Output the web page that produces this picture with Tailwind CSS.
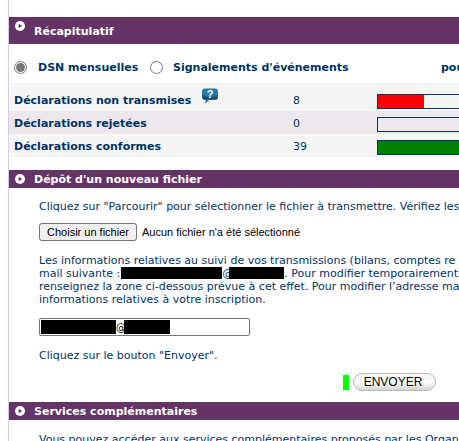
<!DOCTYPE html>
<html lang="fr">
<head>
<meta charset="utf-8">
<script src="https://cdn.jsdelivr.net/npm/@tailwindcss/browser@4"></script>
</head>
<body class="bg-white overflow-hidden">
<div class="w-[459px] h-[441px] overflow-hidden font-['DejaVu_Sans',Verdana,sans-serif] text-[11px] leading-[13px] text-[#003366]">
  <div class="ml-2 h-[441px] border-l border-[#dcc9e6] pt-[17px]">

    <!-- Récapitulatif -->
    <div class="h-[27px] bg-[#663366] flex items-start text-white font-bold">
      <svg class="ml-[6px] mt-[4px] w-[10px] h-[10px] shrink-0" viewBox="0 0 10 10"><circle cx="5" cy="5" r="5" fill="#fff"/><path d="M3.7 2.8 7.2 5 3.7 7.2Z" fill="#663366"/></svg>
      <span class="ml-[9px] mt-[8px]">Récapitulatif</span>
    </div>

    <div class="h-[39px] flex items-center font-bold whitespace-nowrap pt-[8px]">
      <span class="ml-[5px] w-[13px] h-[13px] shrink-0 rounded-full border border-[#767676] flex items-center justify-center"><span class="block w-[9px] h-[9px] rounded-full bg-[#767676]"></span></span>
      <span class="ml-[11px] w-[99px] shrink-0">DSN mensuelles</span>
      <span class="ml-[13px] w-[13px] h-[13px] shrink-0 rounded-full border border-[#767676]"></span>
      <span class="ml-[10px] w-[176px] shrink-0">Signalements d'événements</span>
      <span class="ml-[92px]">pour</span>
    </div>

    <div class="h-[28px] bg-[#f5f5f5] flex items-start">
      <span class="ml-[5px] mt-[11px] w-[188px] shrink-0 font-bold whitespace-nowrap">Déclarations non transmises</span>
      <svg class="mt-[5px] w-[16px] h-[16px] shrink-0" viewBox="0 0 16 16"><path d="M3 0.5H13Q16 0.5 16 3.5V9Q16 12 13 12H7L3.5 15.5V12H3Q0 12 0 9V3.5Q0 0.5 3 0.5Z" fill="#2a7aa8"/><path d="M0.5 7Q8 11 15.5 7V9Q15.5 11.5 13 11.5H3Q0.5 11.5 0.5 9Z" fill="#14506f"/><text x="8" y="10" text-anchor="middle" font-size="11" font-weight="700" fill="#fff" font-family="Liberation Sans">?</text></svg>
      <span class="ml-[75px] mt-[11px] w-[84px] shrink-0">8</span>
      <span class="mt-[11px] h-[15px] w-[100px] shrink-0 border border-[#003366] flex"><span class="block w-[46px] bg-[#ff0000]"></span></span>
    </div>
    <div class="h-[23px] bg-[#ece8ec] flex items-start">
      <span class="ml-[5px] mt-[6px] w-[279px] shrink-0 font-bold whitespace-nowrap">Déclarations rejetées</span>
      <span class="mt-[6px] w-[84px] shrink-0">0</span>
      <span class="mt-[6px] h-[15px] w-[100px] shrink-0 border border-[#003366]"></span>
    </div>
    <div class="h-[23px] bg-[#f5f5f5] flex items-start">
      <span class="ml-[5px] mt-[6px] w-[279px] shrink-0 font-bold whitespace-nowrap">Déclarations conformes</span>
      <span class="mt-[6px] w-[84px] shrink-0">39</span>
      <span class="mt-[6px] h-[15px] w-[100px] shrink-0 border border-[#003366] bg-[#008000]"></span>
    </div>

    <!-- Dépôt -->
    <div class="mt-[13px] h-[18px] bg-[#663366] flex items-center text-white font-bold">
      <svg class="ml-[6px] w-[10px] h-[10px] shrink-0" viewBox="0 0 10 10"><circle cx="5" cy="5" r="5" fill="#fff"/><path d="M3.7 2.8 7.2 5 3.7 7.2Z" fill="#663366"/></svg>
      <span class="ml-[9px]">Dépôt d'un nouveau fichier</span>
    </div>

    <div class="pl-[30px] whitespace-nowrap">
      <p class="mt-[12px]">Cliquez sur "Parcourir" pour sélectionner le fichier à transmettre. Vérifiez les</p>
      <div class="mt-[10px] flex items-center font-['Liberation_Sans',Arial,sans-serif] text-black">
        <span class="w-[98px] h-[18px] shrink-0 border border-[#767676] rounded-[3px] bg-[#efefef] flex items-center justify-center">Choisir un fichier</span>
        <span class="ml-[5px]">Aucun fichier n'a été sélectionné</span>
      </div>
      <p class="mt-[13px]">Les informations relatives au suivi de vos transmissions (bilans, comptes re<br>
      mail suivante :<span class="inline-block ml-[1px] w-[101px] h-[12px] bg-black align-[-2px]"></span><span class="tracking-[-4px]">@</span><span class="inline-block w-[55px] h-[12px] bg-black align-[-2px]"></span>. Pour modifier temporairement<br>
      renseignez la zone ci-dessous prévue à cet effet. Pour modifier l’adresse ma<br>
      informations relatives à votre inscription.</p>
      <div class="mt-[12px] w-[211px] h-[18px] border border-[#767676] rounded-[2px] pl-[1px] flex items-center text-black">
        <span class="block w-[75px] h-[14px] shrink-0 bg-black"></span><span class="w-[8px] text-[10px]">@</span><span class="block w-[46px] h-[14px] shrink-0 bg-black"></span>
      </div>
      <p class="mt-[13px]">Cliquez sur le bouton "Envoyer".</p>
      <div class="mt-[11px] ml-[304px] h-[18px] flex items-center">
        <span class="block w-[6px] h-[15px] shrink-0 bg-[#00ff00]"></span>
        <span class="ml-[4px] w-[83px] h-[18px] shrink-0 rounded-full border border-[#b8b8b8] bg-gradient-to-b from-[#f4f4f4] via-[#ffffff] to-[#d4d4d4] flex items-center justify-center pr-[3px] font-['Liberation_Sans',Arial,sans-serif] text-[12px] text-black">ENVOYER</span>
      </div>
    </div>

    <!-- Services -->
    <div class="mt-[11px] h-[18px] bg-[#663366] flex items-center text-white font-bold">
      <svg class="ml-[6px] w-[10px] h-[10px] shrink-0" viewBox="0 0 10 10"><circle cx="5" cy="5" r="5" fill="#fff"/><path d="M3.7 2.8 7.2 5 3.7 7.2Z" fill="#663366"/></svg>
      <span class="ml-[9px]">Services complémentaires</span>
    </div>
    <p class="mt-[13px] pl-[30px] whitespace-nowrap">Vous pouvez accéder aux services complémentaires proposés par les Organ</p>
  </div>
</div>
</body>
</html>
